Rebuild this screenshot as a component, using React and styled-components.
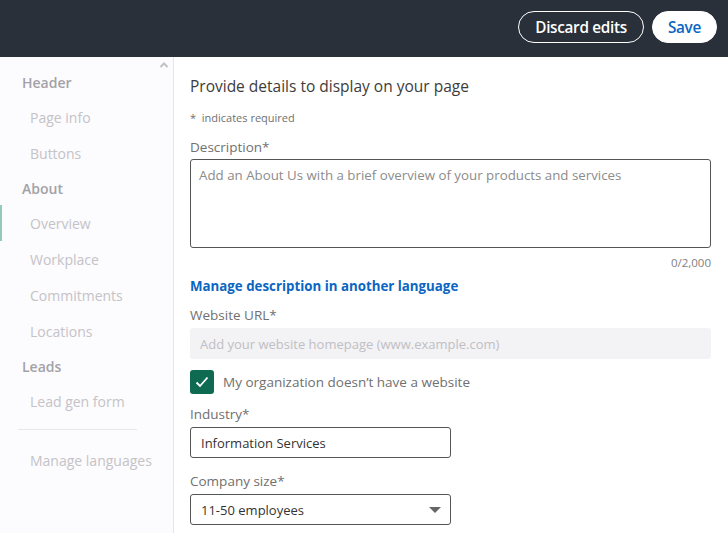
import React from "react";
import styled, { createGlobalStyle } from "styled-components";

const Global = createGlobalStyle`
  html, body { margin: 0; padding: 0; }
  body {
    font-family: "Open Sans", "Noto Sans", "Liberation Sans", sans-serif;
    background: #ffffff;
    overflow: hidden;
  }
`;

const Page = styled.div`
  width: 728px;
  height: 533px;
  display: flex;
  flex-direction: column;
  overflow: hidden;
`;

const TopBar = styled.header`
  height: 57px;
  flex: none;
  background: #29303a;
  display: flex;
  align-items: center;
  justify-content: flex-end;
  gap: 8px;
  padding: 0 11px 3px 0;
  box-sizing: border-box;
`;

const PillButton = styled.button`
  height: 32px;
  padding: 0 ${(p) => (p.$primary ? 15 : 16)}px;
  border-radius: 16px;
  font-family: "Open Sans", sans-serif;
  font-size: 15.3px;
  font-weight: 600;
  letter-spacing: -0.3px;
  cursor: pointer;
  border: 1px solid #ffffff;
  background: ${(p) => (p.$primary ? "#ffffff" : "transparent")};
  color: ${(p) => (p.$primary ? "#0a66c2" : "#ffffff")};
`;

const Body = styled.div`
  flex: 1;
  display: flex;
  min-height: 0;
`;

const Sidebar = styled.nav`
  width: 173px;
  flex: none;
  background: #fcfbfd;
  border-right: 1px solid #e6e5e8;
  position: relative;
  padding-top: 8px;
  box-sizing: content-box;
`;

const ScrollUp = styled.span`
  position: absolute;
  top: 4px;
  right: 4px;
  color: #c2c1c6;
  display: flex;
`;

const NavHeading = styled.div`
  height: 34px;
  display: flex;
  align-items: center;
  padding-left: 22px;
  font-size: 14px;
  font-weight: 600;
  color: #a3a2a7;
`;

const NavItem = styled.div`
  height: 36px;
  display: flex;
  align-items: center;
  padding-left: 30px;
  font-size: 14px;
  color: #c4c3c8;
  position: relative;
  ${(p) =>
    p.$active &&
    `
    &::before {
      content: "";
      position: absolute;
      left: 0;
      top: 0;
      bottom: 0;
      width: 2px;
      background: #95c9bd;
    }
  `}
`;

const NavDivider = styled.hr`
  border: none;
  border-top: 1px solid #e8e7ea;
  margin: 10px 36px 12px 18px;
`;

const Main = styled.main`
  flex: 1;
  padding: 18px 17px 0 16px;
  display: flex;
  flex-direction: column;
`;

const Title = styled.h1`
  margin: 0;
  font-size: 15.5px;
  font-weight: 400;
  color: #3c3c3c;
  line-height: 22px;
`;

const Hint = styled.p`
  margin: 13px 0 0;
  font-size: 11px;
  color: #707070;
  line-height: 16px;
`;

const Label = styled.label`
  display: block;
  margin-top: ${(p) => p.$top || 12}px;
  font-size: 13.5px;
  color: #707070;
  line-height: 20px;
`;

const TextArea = styled.div`
  margin-top: 2px;
  height: 89px;
  border: 1px solid #555555;
  border-radius: 3px;
  box-sizing: border-box;
  padding: 6px 8px;
  font-size: 13.3px;
  color: #8c8c8c;
`;

const Counter = styled.div`
  text-align: right;
  font-size: 11.5px;
  color: #808080;
  margin-top: 7px;
  line-height: 16px;
`;

const Link = styled.a`
  margin-top: 5px;
  font-size: 13.3px;
  font-weight: 700;
  color: #0a66c2;
  line-height: 20px;
  text-decoration: none;
`;

const Input = styled.div`
  margin-top: 3px;
  height: 31px;
  width: ${(p) => (p.$narrow ? "261px" : "auto")};
  box-sizing: border-box;
  border-radius: 3px;
  display: flex;
  align-items: center;
  justify-content: space-between;
  padding: 0 9px 0 10px;
  font-size: 13px;
  border: ${(p) => (p.$disabled ? "none" : "1px solid #555555")};
  background: ${(p) => (p.$disabled ? "#f3f2f5" : "transparent")};
  color: ${(p) => (p.$disabled ? "#c0bfc4" : "#333333")};
`;

const CheckRow = styled.div`
  margin-top: 11px;
  display: flex;
  align-items: center;
  gap: 9px;
  font-size: 13.5px;
  color: #707070;
`;

const CheckBox = styled.span`
  width: 24px;
  height: 24px;
  border-radius: 3px;
  background: #0e6b52;
  display: flex;
  align-items: center;
  justify-content: center;
`;

const Caret = styled.span`
  width: 0;
  height: 0;
  border-left: 6px solid transparent;
  border-right: 6px solid transparent;
  border-top: 6px solid #666666;
`;

const navItems = [
  { heading: "Header" },
  { label: "Page info" },
  { label: "Buttons" },
  { heading: "About" },
  { label: "Overview", active: true },
  { label: "Workplace" },
  { label: "Commitments" },
  { label: "Locations" },
  { heading: "Leads" },
  { label: "Lead gen form" },
];

export default function App() {
  return (
    <Page>
      <Global />
      <TopBar>
        <PillButton>Discard edits</PillButton>
        <PillButton $primary>Save</PillButton>
      </TopBar>
      <Body>
        <Sidebar>
          <ScrollUp>
            <svg width="10" height="8" viewBox="0 0 10 8">
              <path d="M1.5 6 L5 2.5 L8.5 6" fill="none" stroke="currentColor" strokeWidth="2" />
            </svg>
          </ScrollUp>
          {navItems.map((n) =>
            n.heading ? (
              <NavHeading key={n.heading}>{n.heading}</NavHeading>
            ) : (
              <NavItem key={n.label} $active={n.active}>
                {n.label}
              </NavItem>
            )
          )}
          <NavDivider />
          <NavItem>Manage languages</NavItem>
        </Sidebar>
        <Main>
          <Title>Provide details to display on your page</Title>
          <Hint>* &nbsp;indicates required</Hint>
          <Label $top={11}>Description*</Label>
          <TextArea>Add an About Us with a brief overview of your products and services</TextArea>
          <Counter>0/2,000</Counter>
          <Link href="#">Manage description in another language</Link>
          <Label $top={9}>Website URL*</Label>
          <Input $disabled>Add your website homepage (www.example.com)</Input>
          <CheckRow>
            <CheckBox>
              <svg width="16" height="16" viewBox="0 0 16 16">
                <path d="M2.5 8.5 L6 12 L13.5 3.5" fill="none" stroke="#ffffff" strokeWidth="1.8" />
              </svg>
            </CheckBox>
            My organization doesn’t have a website
          </CheckRow>
          <Label $top={10}>Industry*</Label>
          <Input $narrow>Information Services</Input>
          <Label $top={13}>Company size*</Label>
          <Input $narrow>
            11-50 employees
            <Caret />
          </Input>
        </Main>
      </Body>
    </Page>
  );
}
